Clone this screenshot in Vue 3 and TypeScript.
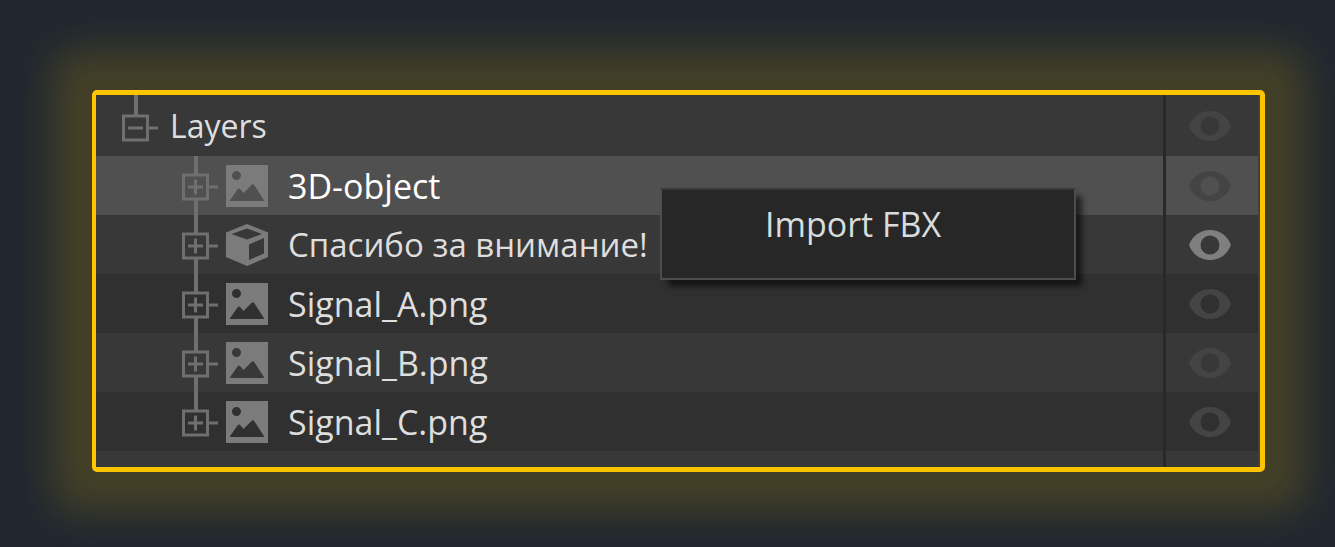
<script setup lang="ts">
import { ref } from 'vue'

interface Layer {
  name: string
  kind: 'image' | 'model'
  visible: boolean
}

const layers = ref<Layer[]>([
  { name: '3D-object', kind: 'image', visible: false },
  { name: 'Спасибо за внимание!', kind: 'model', visible: true },
  { name: 'Signal_A.png', kind: 'image', visible: false },
  { name: 'Signal_B.png', kind: 'image', visible: false },
  { name: 'Signal_C.png', kind: 'image', visible: false },
])
const selected = ref(0)
const rootVisible = ref(false)
</script>

<template>
  <main class="stage">
    <section class="panel">
      <div class="row root">
        <div class="cell">
          <button class="toggle" type="button" aria-label="Collapse Layers">
            <svg width="36" height="61" viewBox="0 0 36 61" fill="none" stroke="#6f6f6f">
              <path d="M14 0V20" stroke-width="4" />
              <rect x="1.5" y="21" width="24" height="24" stroke-width="3" />
              <path d="M6 33H21M27 33H36" stroke-width="3" />
            </svg>
          </button>
          <span class="name">Layers</span>
        </div>
        <div class="eye-cell">
          <button class="eye" :class="{ on: rootVisible }" type="button" aria-label="Visibility of Layers" @click="rootVisible = !rootVisible">
            <svg width="42" height="30" viewBox="0 0 42 30" fill="currentColor" fill-rule="evenodd">
              <path d="M0 15C3 7 10 0 21 0S39 7 42 15C39 23 32 30 21 30S3 23 0 15ZM21 5.500A9.500 9.500 0 1 0 21 24.500A9.500 9.500 0 1 0 21 5.500Z" />
            </svg>
          </button>
        </div>
      </div>

      <div
        v-for="(layer, i) in layers"
        :key="layer.name"
        class="row child"
        :class="{ selected: i === selected }"
        @click="selected = i"
      >
        <div class="cell">
          <button class="toggle" type="button" :aria-label="'Expand ' + layer.name">
            <svg width="36" height="59" viewBox="0 0 36 59" fill="none" stroke="#6f6f6f">
              <path d="M14 0V18" stroke-width="4" />
              <path v-if="i < layers.length - 1" d="M14 44V59" stroke-width="4" />
              <rect x="1.5" y="19" width="24" height="24" stroke-width="3" />
              <path d="M6 31H21M13.500 23.500V38.500M27 31H36" stroke-width="3" />
            </svg>
          </button>
          <svg class="kind" width="42" height="42" viewBox="0 0 42 42" fill="#7b7b7b" fill-rule="evenodd">
            <path
              v-if="layer.kind === 'image'"
              d="M0 0H42V42H0ZM10.500 6A4.500 4.500 0 1 0 10.500 15A4.500 4.500 0 1 0 10.500 6ZM3.500 36L11.500 24.500Q13 22.500 14.500 24.500L17.500 28L25.500 20Q27 18.500 28.500 20.500L38.500 36Z"
            />
            <path
              v-else
              d="M21 0L42 8.500V33L21 42L0 33V8.500ZM5.500 10L21 15.500L36 10L21 4.500ZM23 20.500V36L38 29.500V14Z"
            />
          </svg>
          <span class="name" :class="layer.kind">{{ layer.name }}</span>
        </div>
        <div class="eye-cell">
          <button class="eye" :class="{ on: layer.visible }" type="button" :aria-label="'Visibility of ' + layer.name" @click.stop="layer.visible = !layer.visible">
            <svg width="42" height="30" viewBox="0 0 42 30" fill="currentColor" fill-rule="evenodd">
              <path d="M0 15C3 7 10 0 21 0S39 7 42 15C39 23 32 30 21 30S3 23 0 15ZM21 5.500A9.500 9.500 0 1 0 21 24.500A9.500 9.500 0 1 0 21 5.500Z" />
            </svg>
          </button>
        </div>
      </div>

      <div class="row tail">
        <div class="cell"></div>
        <div class="eye-cell"></div>
      </div>

      <div class="menu" role="menu">
        <button class="menu-item" type="button" role="menuitem">Import FBX</button>
      </div>
    </section>
  </main>
</template>

<style>
body {
  margin: 0;
  background: #20272f;
}
</style>

<style scoped>
.stage {
  box-sizing: border-box;
  min-height: 100vh;
  padding: 90px 70px 75px 92px;
  overflow: hidden;
  font-family: "Open Sans", "Noto Sans", sans-serif;
}
.panel {
  position: relative;
  border: 5px solid #ffc400;
  border-left-width: 4px;
  border-radius: 5px;
  background: #404040;
  box-shadow: 0 0 42px 40px rgba(255, 196, 0, 0.17);
}
.row {
  display: flex;
  height: 59px;
  margin-right: 2px;
  background: #383838;
}
.root {
  height: 61px;
}
.tail {
  height: 16px;
}
.child:nth-child(even) {
  background: #303030;
}
.child:nth-child(odd) {
  background: #383838;
}
.row.selected {
  background: #505050;
}
.cell {
  display: flex;
  align-items: center;
  flex: 1;
  min-width: 0;
  padding-left: 86px;
}
.root .cell {
  padding-left: 26px;
}
button {
  padding: 0;
  border: 0;
  background: none;
  font: inherit;
  cursor: pointer;
}
.toggle,
.toggle svg,
.eye svg {
  display: block;
}
.kind {
  flex: none;
  margin-left: 8px;
}
.name {
  margin-left: 20px;
  color: #dedede;
  font-size: 34px;
  line-height: 40px;
  white-space: nowrap;
}
.name.model {
  font-size: 33px;
}
.root .name {
  margin-left: 12px;
  font-size: 32px;
}
.selected .name {
  color: #ffffff;
}
.eye-cell {
  display: flex;
  align-items: center;
  box-sizing: border-box;
  width: 95px;
  padding-left: 23px;
  border-left: 3px solid #292929;
}
.eye {
  color: #444444;
}
.eye.on {
  color: #7f7f7f;
}
.menu {
  position: absolute;
  top: 93px;
  left: 564px;
  box-sizing: border-box;
  width: 416px;
  height: 92px;
  border: 2px solid #4d4d4d;
  border-top-color: #3a3a3a;
  background: #272727;
  box-shadow: 7px 7px 6px -1px rgba(0, 0, 0, 0.6);
}
.menu-item {
  display: block;
  width: 100%;
  padding: 13px 0 13px 103px;
  color: #d8dcdc;
  font-size: 34px;
  line-height: 42px;
  text-align: left;
}
</style>
